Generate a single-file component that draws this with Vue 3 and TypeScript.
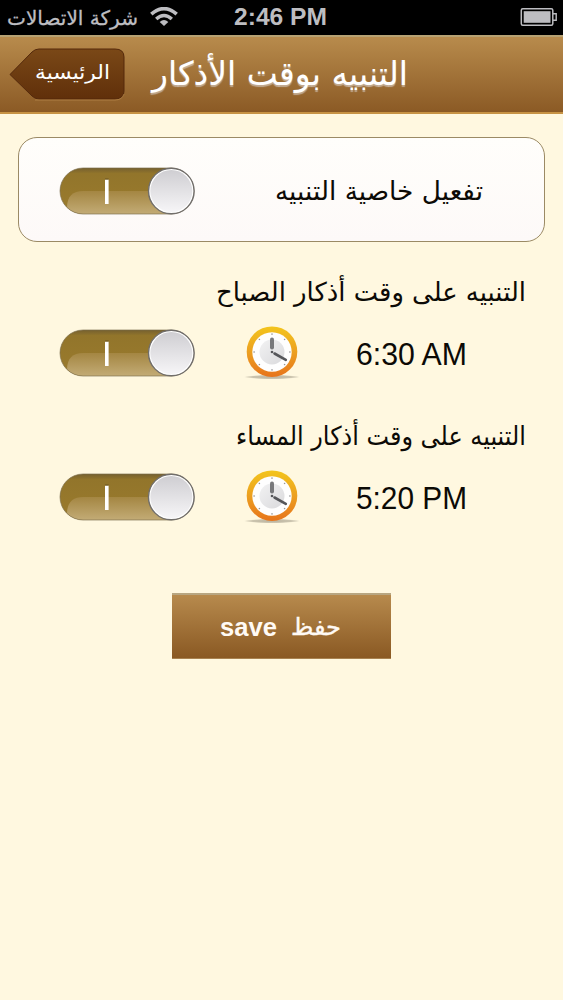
<script setup lang="ts">
import { defineComponent, h, ref } from 'vue'

/* Single line of text fitted to an exact width, baseline given from the top of the box. */
const FitText = defineComponent({
  props: {
    text: { type: String, required: true },
    w: { type: Number, required: true },
    h: { type: Number, required: true },
    base: { type: Number, required: true },
    size: { type: Number, required: true },
  },
  setup(props) {
    return () =>
      h('svg', { width: props.w, height: props.h, style: { overflow: 'visible', display: 'block', flex: 'none' } }, [
        h('text', {
          x: props.w / 2,
          y: props.base,
          'text-anchor': 'middle',
          'font-size': props.size,
          textLength: props.w,
          lengthAdjust: 'spacingAndGlyphs',
          fill: 'currentColor',
        }, props.text),
      ])
  },
})

interface Reminder {
  id: string
  label: string
  width: number
  time: string
  on: boolean
}

const enabled = ref(true)
const reminders = ref<Reminder[]>([
  { id: 'morning', label: 'التنبيه على وقت أذكار الصباح', width: 310, time: '6:30 AM', on: true },
  { id: 'evening', label: 'التنبيه على وقت أذكار المساء', width: 290, time: '5:20 PM', on: true },
])
const ticks = [0, 45, 90, 135, 180, 225, 270, 315]
</script>

<template>
  <div class="screen">
    <svg class="defs" width="0" height="0" aria-hidden="true">
      <defs>
        <linearGradient id="track" x1="0" y1="0" x2="0" y2="1">
          <stop offset="0" stop-color="#75602f" />
          <stop offset=".12" stop-color="#92752b" />
          <stop offset="1" stop-color="#9b7b2d" />
        </linearGradient>
        <linearGradient id="gloss" x1="0" y1="0" x2="0" y2="1">
          <stop offset="0" stop-color="#a48642" />
          <stop offset="1" stop-color="#c4ad78" />
        </linearGradient>
        <linearGradient id="knob" x1="0" y1="0" x2="0" y2="1">
          <stop offset="0" stop-color="#cfced2" />
          <stop offset="1" stop-color="#f6f5f7" />
        </linearGradient>
        <linearGradient id="rim" x1="0" y1="0" x2="0" y2="1">
          <stop offset="0" stop-color="#f3c51d" />
          <stop offset=".5" stop-color="#eca020" />
          <stop offset="1" stop-color="#e7741b" />
        </linearGradient>
        <linearGradient id="dial" x1="0" y1="0" x2="1" y2="1">
          <stop offset="0" stop-color="#f2f2f3" />
          <stop offset="1" stop-color="#d9d9dc" />
        </linearGradient>
        <radialGradient id="ground">
          <stop offset="0" stop-color="#8b8472" stop-opacity=".6" />
          <stop offset=".7" stop-color="#8b8472" stop-opacity=".45" />
          <stop offset="1" stop-color="#8b8472" stop-opacity="0" />
        </radialGradient>
        <linearGradient id="back" x1="0" y1="0" x2="0" y2="1">
          <stop offset="0" stop-color="#7a4817" />
          <stop offset="1" stop-color="#602f0a" />
        </linearGradient>
        <clipPath id="pill"><rect x="1" y="1" width="134" height="46" rx="23" /></clipPath>
        <g id="switch">
          <rect x="1" y="1" width="134" height="46" rx="23" fill="url(#track)" />
          <g clip-path="url(#pill)">
            <path d="M8 41 C8 29 14 24 24 24 H112 V48 H8 Z" fill="url(#gloss)" />
          </g>
          <rect x="1" y="1" width="134" height="46" rx="23" fill="none" stroke="#796b4c" stroke-opacity=".65" />
          <rect x="46" y="12.5" width="3.6" height="24.5" fill="#fff" />
          <rect x="46" y="11.5" width="3.6" height="1" fill="#6b5420" />
          <circle cx="112.3" cy="24" r="22.8" fill="#fff" stroke="#716e6b" stroke-width="1.4" />
          <circle cx="112.3" cy="24" r="21" fill="url(#knob)" />
        </g>
      </defs>
    </svg>

    <header class="status">
      <FitText class="carrier" text="شركة الاتصالات" :w="131" :h="36" :base="24.5" :size="20" />
      <svg class="wifi" width="28" height="20" viewBox="0 0 28 20" fill="none" stroke="#bdbdc1">
        <path d="M1.3 7.2 Q14 -4 26.7 7.2" stroke-width="3.6" />
        <path d="M6.2 12 Q14 5 21.8 12" stroke-width="3.5" />
        <path d="M14 19 L9.7 14.9 Q14 11.3 18.3 14.9 Z" fill="#bdbdc1" stroke="none" />
      </svg>
      <FitText class="clock-text" text="2:46 PM" :w="93" :h="36" :base="25.2" :size="23.5" />
      <svg class="battery" width="38" height="18" viewBox="0 0 38 18">
        <rect x="1.3" y=".8" width="31.5" height="16.4" rx="1.5" fill="none" stroke="#bdbdc1" stroke-width="1.5" />
        <rect x="3.7" y="3.2" width="26.8" height="11.6" fill="#bdbdc1" />
        <path d="M33 5.8 H36.2 V12.2 H33" fill="none" stroke="#bdbdc1" stroke-width="1.4" />
      </svg>
    </header>

    <nav class="bar">
      <button class="back">
        <svg class="back-shape" width="116" height="53" viewBox="0 0 116 53">
          <path d="M1 26.5 L23 4 Q26 1 30 1 H106 Q115 1 115 9 V43 Q115 51 106 51 H30 Q26 51 23 48 Z" fill="url(#back)" stroke="#54290b" stroke-width="1" />
          <path d="M26 52 H106 Q113 52 115 46" fill="none" stroke="#c08f50" stroke-opacity=".65" />
        </svg>
        <FitText class="back-label" text="الرئيسية" :w="75" :h="53" :base="31" :size="19.5" />
      </button>
      <FitText class="title" text="التنبيه بوقت الأذكار" :w="256" :h="75" :base="47" :size="33" />
    </nav>

    <main>
      <section class="card">
        <button class="toggle" role="switch" :aria-checked="enabled" @click="enabled = !enabled">
          <svg width="136" height="48"><use href="#switch" /></svg>
        </button>
        <FitText text="تفعيل خاصية التنبيه" :w="208" :h="48" :base="33" :size="26" />
      </section>

      <section v-for="item in reminders" :key="item.id" class="reminder">
        <div class="heading">
          <FitText :text="item.label" :w="item.width" :h="36" :base="23" :size="26" />
        </div>
        <div class="controls">
          <button class="toggle" role="switch" :aria-checked="item.on" @click="item.on = !item.on">
            <svg width="136" height="48"><use href="#switch" /></svg>
          </button>
          <svg class="clock" width="58" height="56" viewBox="0 0 58 56">
            <ellipse cx="29" cy="52" rx="28.5" ry="2.2" fill="url(#ground)" />
            <circle cx="29" cy="26.7" r="25.3" fill="url(#rim)" />
            <circle cx="29" cy="27" r="19.7" fill="#fefefe" />
            <circle cx="29" cy="27" r="12.5" fill="url(#dial)" />
            <g stroke="#8a8a8c" stroke-width="1">
              <path v-for="a in ticks" :key="a" d="M29 8.3 V10" :transform="`rotate(${a} 29 27)`" />
            </g>
            <path d="M29 14.5 V22.5" stroke="#77787b" stroke-width="4" stroke-linecap="round" />
            <path d="M31.5 28.5 L42.8 34.8" stroke="#55565a" stroke-width="2.6" stroke-linecap="round" />
            <circle cx="29" cy="27" r="1.3" fill="#55565a" />
          </svg>
          <FitText class="time" :text="item.time" :w="111" :h="48" :base="36.4" :size="30.5" />
        </div>
      </section>

      <button class="save">
        <FitText class="latin" text="save" :w="57" :h="63" :base="40.5" :size="26" />
        <FitText class="arabic" text="حفظ" :w="50" :h="63" :base="39.5" :size="24" />
      </button>
    </main>
  </div>
</template>

<style>
body {
  margin: 0;
  background: #fff8e0;
}
</style>

<style scoped>
.screen {
  width: 563px;
  height: 1000px;
  overflow: hidden;
  background: #fff8e0;
  color: #0c0a06;
  font-family: 'DejaVu Sans', sans-serif;
}
.defs {
  position: absolute;
}
button {
  margin: 0;
  padding: 0;
  border: 0;
  background: none;
  color: inherit;
  font: inherit;
}
.status {
  display: flex;
  align-items: center;
  height: 35px;
  padding: 0 5px 0 7px;
  background: #000;
  color: #bdbdc1;
}
.wifi {
  margin: 0 0 1px 12px;
}
.clock-text {
  margin-left: 56px;
  font-family: 'Liberation Sans', sans-serif;
  font-weight: 700;
}
.battery {
  margin: 0 0 1px auto;
}
.bar {
  display: flex;
  align-items: flex-start;
  box-sizing: border-box;
  height: 79px;
  padding: 1px 0 0 9px;
  border-top: 2px solid #b7a273;
  border-bottom: 2px solid #c79345;
  background: linear-gradient(#b88b4c, #8b5a25) padding-box;
  color: #fff;
}
.back {
  display: grid;
  margin-top: 10px;
}
.back > * {
  grid-area: 1 / 1;
}
.back-label {
  margin-left: 26px;
}
.title {
  margin-left: 27px;
  text-shadow: 0 2px 1px rgba(226, 222, 222, 0.55);
}
.carrier {
  stroke: currentColor;
  stroke-width: 0.3px;
}
main {
  display: flex;
  flex-direction: column;
  padding: 23px 18px 0;
}
.card {
  display: flex;
  align-items: center;
  justify-content: space-between;
  box-sizing: border-box;
  height: 105px;
  padding: 2px 61px 0 40px;
  border: 1px solid #9b8a65;
  border-radius: 19px;
  background: linear-gradient(#fffefb, #fdf9f8);
}
.toggle {
  display: block;
  width: 136px;
  height: 48px;
}
.toggle svg {
  display: block;
}
.reminder {
  height: 144px;
}
.card + .reminder {
  margin-top: 36px;
}
.heading {
  display: flex;
  justify-content: flex-end;
  height: 47px;
  padding-right: 19px;
}
.controls {
  display: flex;
  padding-left: 41px;
}
.controls .toggle {
  margin-top: 4px;
}
.clock {
  margin-left: 48px;
}
.time {
  margin: 4px 0 0 55px;
  font-family: 'Liberation Sans', sans-serif;
}
.save {
  display: flex;
  align-self: center;
  gap: 14px;
  box-sizing: border-box;
  width: 219px;
  height: 66px;
  margin-top: 27px;
  padding-left: 48px;
  border-top: 2px solid #b8a681;
  border-bottom: 1px solid #a98250;
  background: linear-gradient(#b78a4d, #8a5923);
  color: #fffaf5;
}
.latin {
  font-family: 'Liberation Sans', sans-serif;
  font-weight: 700;
}
.arabic {
  stroke: currentColor;
  stroke-width: 0.4px;
}
</style>
